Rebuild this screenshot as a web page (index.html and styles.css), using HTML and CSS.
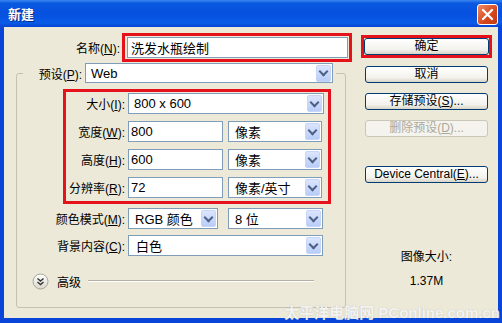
FILE: index.html
```html
<!DOCTYPE html>
<html lang="zh-CN">
<head>
<meta charset="UTF-8" />
<title>新建</title>
<link rel="stylesheet" href="styles.css">
</head>
<body>

<div class="window">
  <div class="titlebar">
    <span class="title">新建</span>
    <span class="close">
      <svg width="13" height="13" viewBox="0 0 13 13"><path d="M2 2 L11 11 M11 2 L2 11" stroke="#fff" stroke-width="2.2" stroke-linecap="round"/></svg>
    </span>
  </div>

  <div class="body">
    <div class="main">
      <div class="name-row">
        <span class="name-label">名称(<u>N</u>):</span>
        <div class="mark name-mark"><div class="field value">洗发水瓶绘制</div></div>
      </div>

      <fieldset class="group">
        <legend class="preset">
          <span class="lbl">预设(<u>P</u>):</span>
          <div class="select w248">Web<span class="arrow"></span></div>
        </legend>

        <div class="mark size-mark">
          <div class="row">
            <span class="lbl">大小(<u>I</u>):</span>
            <div class="select w196">800 x 600<span class="arrow"></span></div>
          </div>
          <div class="row">
            <span class="lbl">宽度(<u>W</u>):</span>
            <div class="field num">800</div>
            <div class="select unit">像素<span class="arrow"></span></div>
          </div>
          <div class="row">
            <span class="lbl">高度(<u>H</u>):</span>
            <div class="field num">600</div>
            <div class="select unit">像素<span class="arrow"></span></div>
          </div>
          <div class="row">
            <span class="lbl">分辨率(<u>R</u>):</span>
            <div class="field num">72</div>
            <div class="select unit">像素/英寸<span class="arrow"></span></div>
          </div>
        </div>

        <div class="row outer mode-row">
          <span class="lbl">颜色模式(<u>M</u>):</span>
          <div class="select w90">RGB 颜色<span class="arrow"></span></div>
          <div class="select w95">8 位<span class="arrow"></span></div>
        </div>
        <div class="row outer bg-row">
          <span class="lbl">背景内容(<u>C</u>):</span>
          <div class="select w195">白色<span class="arrow"></span></div>
        </div>

        <div class="advanced">
          <svg width="17" height="17" viewBox="0 0 17 17">
            <defs>
              <linearGradient id="ball" x1="0" y1="0" x2="0" y2="1">
                <stop offset="0" stop-color="#ffffff"/>
                <stop offset="1" stop-color="#d8d6cc"/>
              </linearGradient>
            </defs>
            <circle cx="8.5" cy="8.5" r="7.5" fill="url(#ball)" stroke="#a7a59a"/>
            <path d="M5.5 5.5 L8.5 8 L11.5 5.5 M5.5 9 L8.5 11.5 L11.5 9" fill="none" stroke="#333" stroke-width="1.4"/>
          </svg>
          <span class="adv-text">高级</span>
          <span class="etch"></span>
        </div>
      </fieldset>
    </div>

    <div class="side">
      <div class="mark ok-mark"><button class="btn">确定</button></div>
      <button class="btn">取消</button>
      <button class="btn">存储预设(<u>S</u>)...</button>
      <button class="btn disabled">删除预设(<u>D</u>)...</button>
      <button class="btn device">Device Central(<u>E</u>)...</button>
      <div class="info">图像大小:</div>
      <div class="info size">1.37M</div>
    </div>
  </div>

  <div class="watermark">太平洋电脑网 PConline.com.cn</div>
</div>

</body>
</html>
```

FILE: styles.css
```css
*{box-sizing:border-box;}
body{margin:0; font-family:"Liberation Sans","Noto Sans CJK SC",sans-serif; font-size:12px; color:#000; background:#fff;}

.window{position:relative; width:502px; height:323px; background:#0845d8; padding-bottom:5px;}
.titlebar{height:27px; display:flex; align-items:center; justify-content:space-between; padding:0 4px 0 8px;
  background:linear-gradient(#3a86f0 0, #0a58e0 12%, #0550de 50%, #0a5ae8 85%, #0444d0 100%);}
.title{color:#fff; font-weight:bold; font-size:13px; text-shadow:1px 1px 0 #0a2a8a;}
.close{width:21px; height:21px; margin-top:1px; display:flex; align-items:center; justify-content:center;
  border:1px solid #fff; border-radius:3px; background:linear-gradient(135deg,#f08a62,#d5471c 60%,#c23a12);}

.body{display:flex; margin:0 4px; height:291px; background:#ece9d8;}
.main{width:357px;}
.side{width:131px; display:flex; flex-direction:column; align-items:flex-start;}

.mark{border:3px solid #e5121b;}
.name-row{display:flex; align-items:center; margin-top:6px;}
.name-label{width:116px; text-align:right;}
.name-mark{margin-left:2px; width:230px; padding:1px 1px 1px 2px;}

.field{height:21px; background:#fff; border:1px solid #7f9db9; display:flex; align-items:center; padding-left:3px; font-size:13px; white-space:nowrap;}
.field.value{width:100%;}
.field.num{width:95px; padding-left:2px;}

.select{height:21px; background:#fff; border:1px solid #7f9db9; display:flex; align-items:center; padding-left:5px; font-size:13px; white-space:nowrap;}
.arrow{margin-left:auto; margin-right:1px; width:15px; height:17px; border:1px solid #c6d5f8; border-radius:2px;
  background:linear-gradient(#dbe5fd,#b9cdf9); display:flex; align-items:center; justify-content:center;}
.arrow::after{content:""; width:5px; height:5px; margin-top:-3px; border-right:2px solid #4d6185; border-bottom:2px solid #4d6185; transform:rotate(45deg);}
.w248{width:248px;}
.w196{width:196px;}
.w195{width:195px; padding-left:7px;}
.w90{width:90px; padding-left:6px;}
.w95{width:95px; margin-left:10px; padding-left:6px;}
.unit{width:94px; margin-left:5px; padding-left:6px;}

.group{margin:1px 0 0 12px; width:330px; height:245px; border:1px solid #c5c2b2; border-radius:3px; padding:6px 0 0 0; min-width:0;}
.preset{display:flex; align-items:center; margin-left:6px; padding:0 3px 0 0; height:20px;}
.preset .lbl{width:59px; text-align:right; margin-right:3px;}
.preset .select{height:20px;}

.size-mark{margin-left:46px; width:268px; padding:1px 0 3px 0; display:flex; flex-direction:column; gap:7px;}
.row{display:flex; align-items:center; height:21px;}
.row .lbl{width:59px; text-align:right; margin-right:3px; white-space:nowrap;}
.row.outer .lbl{width:108px;}
.mode-row{margin-top:4px;}
.bg-row{margin-top:6px;}

.advanced{display:flex; align-items:center; height:18px; margin-top:16px; padding-left:15px;}
.adv-text{margin-left:8px;}
.etch{margin-left:7px; width:226px; border-top:1px solid #b3b0a3; border-bottom:1px solid #fff;}

.btn{width:123px; height:17px; margin-left:4px; padding:0; font:inherit; font-size:12px; color:#000; line-height:15px;
  background:linear-gradient(#fff,#f3f2ed 70%,#d8d4c8); border:1px solid #003c74; border-radius:3px;}
.btn + .btn{margin-top:10px;}
.ok-mark{margin-top:8px; width:131px; padding:0;}
.ok-mark .btn{margin:0; width:125px; height:17px;}
.ok-mark + .btn{margin-top:8px;}
.btn.disabled{color:#aca899; border-color:#c9c7ba; background:#f4f3ee;}
.btn.device{margin-top:29px;}
.info{width:131px; text-align:center; margin-top:67px; line-height:14px;}
.info.size{margin-top:10px;}

.watermark{position:absolute; right:2px; bottom:1px; font-size:15px; font-weight:bold; color:rgba(255,255,255,.85);
  text-shadow:0 0 1px rgba(140,140,140,.6); white-space:nowrap;}
```
